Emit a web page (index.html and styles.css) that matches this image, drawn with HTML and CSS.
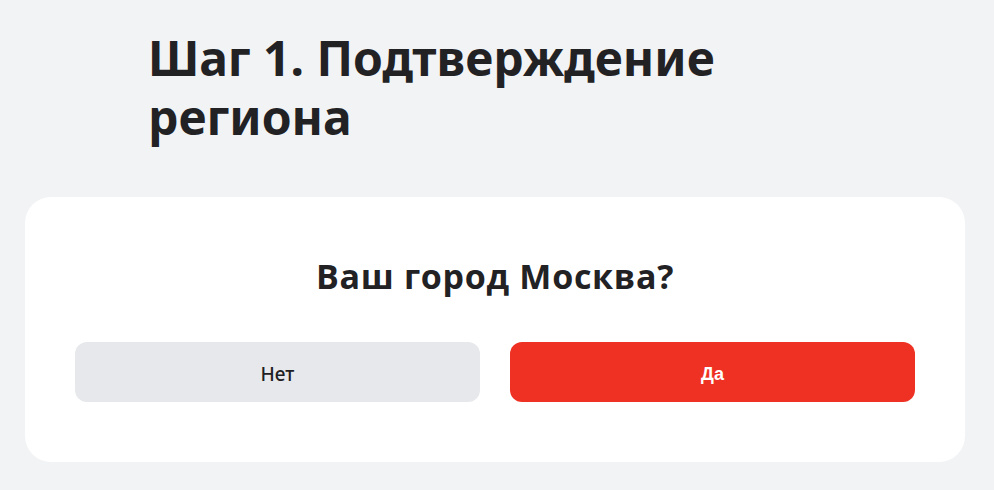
FILE: index.html
```html
<!DOCTYPE html>
<html lang="ru">
<head>
<meta charset="utf-8">
<link rel="stylesheet" href="styles.css">
</head>
<body>
<main class="page">
  <h1 class="title">Шаг 1. Подтверждение региона</h1>
  <section class="card">
    <h2 class="question">Ваш город Москва?</h2>
    <div class="actions">
      <button class="btn btn-no">Нет</button>
      <button class="btn btn-yes">Да</button>
    </div>
  </section>
</main>
</body>
</html>
```
FILE: styles.css
```css
html, body {
  margin: 0;
  padding: 0;
  background: #f2f3f5;
}
.page {
  padding: 28px 29px 0 25px;
  font-family: "Noto Sans", "Open Sans", sans-serif;
  color: #222225;
}
.title {
  margin: 0 0 51px 123px;
  width: 620px;
  font-size: 48px;
  line-height: 59px;
  font-weight: 700;
}
.card {
  background: #fff;
  border-radius: 26px;
  padding: 56px 50px 60px;
}
.question {
  margin: 0 0 43px;
  text-align: center;
  font-family: "Open Sans", "Noto Sans", sans-serif;
  font-size: 34px;
  line-height: 46px;
  letter-spacing: 0.7px;
  font-weight: 700;
}
.actions {
  display: flex;
  gap: 30px;
}
.btn {
  flex: 1;
  height: 60px;
  border: none;
  border-radius: 12px;
  padding: 4px 0 0;
}
.btn-no {
  background: #e7e8eb;
  color: #1f2023;
  font-family: "Noto Sans", sans-serif;
  font-size: 19px;
  font-weight: 500;
}
.btn-yes {
  background: #ef3124;
  color: #fff;
  font-family: "Liberation Sans", Arial, sans-serif;
  font-size: 18px;
  font-weight: 700;
}
```
